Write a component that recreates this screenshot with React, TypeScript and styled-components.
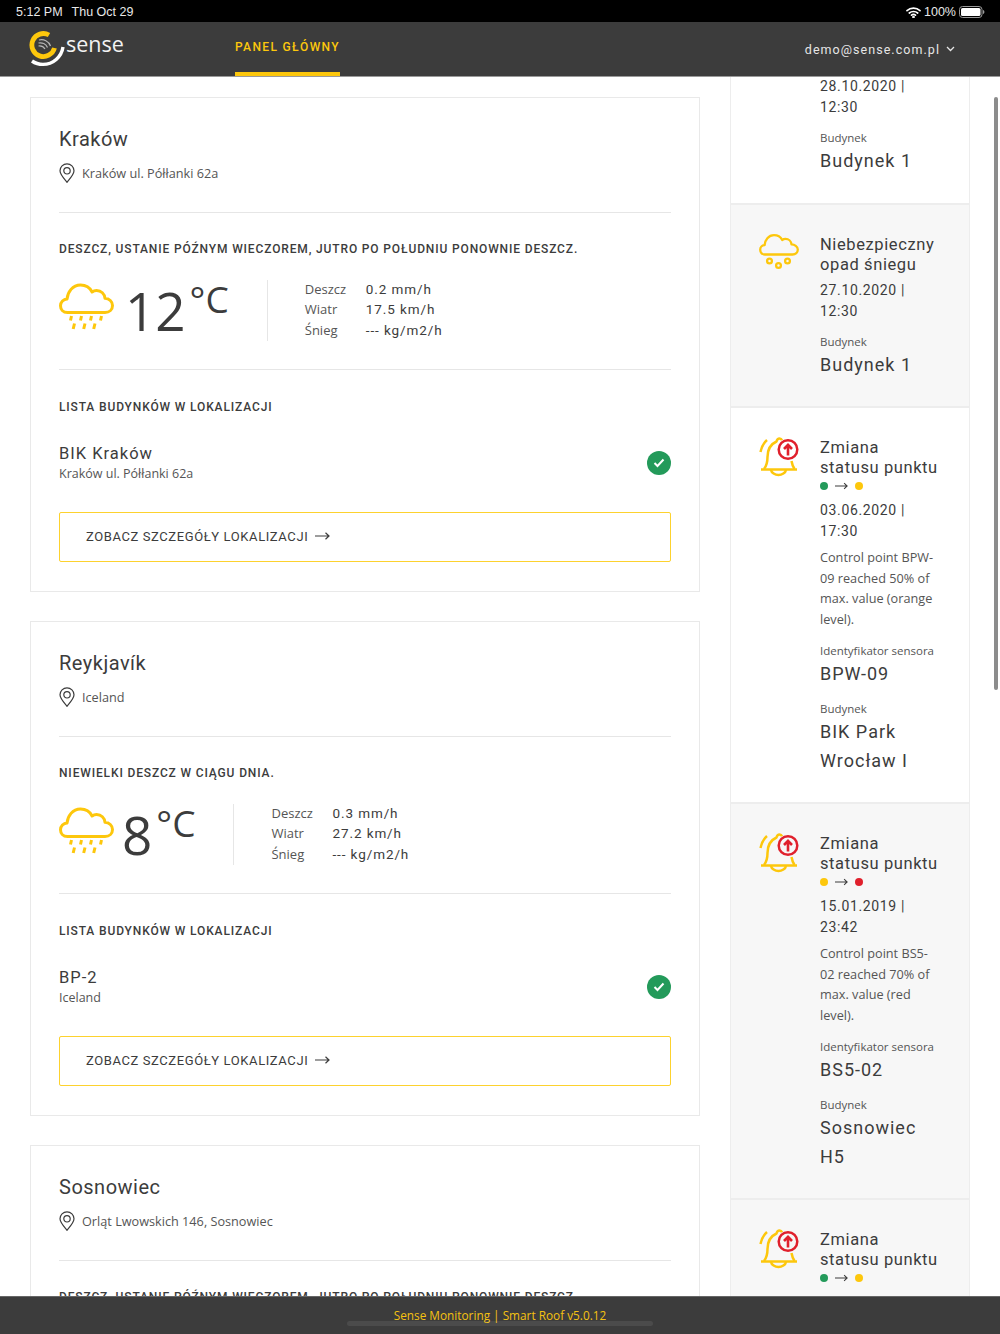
import React from 'react';
import styled, { createGlobalStyle } from 'styled-components';

const GlobalStyle = createGlobalStyle`
  html, body {
    margin: 0;
    padding: 0;
    background: #fff;
  }
  * {
    box-sizing: border-box;
  }
`;

const HEAD = `Roboto, "Noto Sans", sans-serif`;
const BODY = `"Open Sans", "Noto Sans", sans-serif`;

const Page = styled.div`
  position: relative;
  display: flex;
  flex-direction: column;
  width: 1000px;
  height: 1334px;
  overflow: hidden;
  color: #3c3c3c;
`;

const StatusBar = styled.div`
  display: flex;
  justify-content: space-between;
  align-items: center;
  flex: 0 0 22px;
  padding: 2px 15px 0 16px;
  background: #000;
  color: #e8e8e8;
  font: 12.5px "Liberation Sans", sans-serif;
`;
const StatusLeft = styled.div`
  display: flex;
  gap: 9px;
`;
const StatusRight = styled.div`
  display: flex;
  align-items: center;
  gap: 3px;
`;

const Header = styled.header`
  display: flex;
  justify-content: space-between;
  flex: 0 0 55px;
  padding: 0 45px 0 29px;
  background: #3c3c3c;
  border-bottom: 1px solid #999;
`;
const HeaderLeft = styled.div`
  display: flex;
`;
const Logo = styled.div`
  display: flex;
  align-items: flex-start;
  width: 206px;
  padding-top: 9px;
`;
const LogoText = styled.span`
  margin: 1px 0 0 1px;
  color: #f2f2f2;
  font: 400 21.5px/24px ${BODY};
`;
const NavItem = styled.div`
  display: flex;
  align-items: center;
  height: 54px;
  border-bottom: 4px solid #fdc70c;
  color: #fdc70c;
  font: 500 12px ${HEAD};
  letter-spacing: 1.35px;
`;
const UserMenu = styled.div`
  display: flex;
  align-items: center;
  gap: 6px;
  color: #e6e6e6;
  font: 400 12.5px ${HEAD};
  letter-spacing: 1.05px;
`;

const Main = styled.main`
  display: flex;
  flex: 1;
  gap: 30px;
  min-height: 0;
  padding: 0 30px;
  overflow: hidden;
`;
const LeftColumn = styled.div`
  display: flex;
  flex-direction: column;
  flex: 0 0 670px;
  gap: 29px;
  padding-top: 20px;
`;
const RightColumn = styled.div`
  display: flex;
  flex-direction: column;
  flex: 0 0 240px;
  min-width: 0;
`;

const LocationCard = styled.section`
  flex: none;
  padding: 28px 28px 29px;
  border: 1px solid #e9e9e9;
`;
const CityName = styled.h2`
  margin: 0;
  font: 400 20px/26px ${HEAD};
  letter-spacing: 0.5px;
`;
const AddressRow = styled.div`
  display: flex;
  align-items: center;
  gap: 7px;
  margin: 9px 0 27px;
  font: 400 12.7px/24px ${BODY};
  color: #555;
`;
const Divider = styled.hr`
  margin: 0;
  border: 0;
  border-top: 1px solid #e6e6e6;
`;
const SectionLabel = styled.div<{ $top: number }>`
  margin-top: ${(p) => p.$top}px;
  font: 500 12px/16px ${HEAD};
  letter-spacing: 0.86px;
  text-transform: uppercase;
`;
const WeatherRow = styled.div`
  display: flex;
  align-items: flex-start;
  height: 61px;
  margin: 23px 0 28px;
`;
const CloudSlot = styled.div`
  margin-top: 3px;
  line-height: 0;
`;
const Temperature = styled.div<{ $gap: number }>`
  display: flex;
  align-items: flex-start;
  margin: 0 38px 0 ${(p) => p.$gap}px;
  font: 400 53px/62px ${BODY};
`;
const Unit = styled.span`
  margin-left: 4px;
  font: 400 37px/37px ${BODY};
`;
const Readings = styled.div`
  display: grid;
  grid-template-columns: 61px auto;
  align-items: center;
  align-content: center;
  height: 100%;
  padding: 0 0 2px 37px;
  border-left: 1px solid #e6e6e6;
`;
const ReadingName = styled.span`
  font: 400 13px/20.5px ${BODY};
  color: #555;
`;
const ReadingValue = styled.span`
  font: 400 13.5px/20.5px ${HEAD};
  letter-spacing: 0.9px;
`;
const BuildingRow = styled.div`
  display: flex;
  align-items: center;
  justify-content: space-between;
  margin-top: 28px;
`;
const BuildingName = styled.div`
  font: 400 16.5px/22px ${HEAD};
  letter-spacing: 1px;
`;
const BuildingAddress = styled.div`
  font: 400 12.5px/18px ${BODY};
  color: #555;
`;
const StatusOk = styled.span`
  display: flex;
  align-items: center;
  justify-content: center;
  width: 24px;
  height: 24px;
  border-radius: 50%;
  background: #239a5a;
`;
const DetailsButton = styled.button`
  display: flex;
  align-items: center;
  gap: 7px;
  width: 100%;
  height: 50px;
  margin-top: 29px;
  padding: 0 0 2px 26px;
  background: #fff;
  border: 1px solid #fdd22e;
  border-radius: 2px;
  color: #3c3c3c;
  font: 400 13px ${HEAD};
  letter-spacing: 0.6px;
  text-transform: uppercase;
`;

const AlertCard = styled.article<{ $shaded?: boolean; $flush?: boolean }>`
  display: flex;
  flex: none;
  gap: 21px;
  margin-top: ${(p) => (p.$flush ? -7 : 0)}px;
  padding: ${(p) => (p.$flush ? '0 20px 28px 28px' : '30px 20px 27px 28px')};
  background: ${(p) => (p.$shaded ? '#f7f7f7' : '#fff')};
  border: 1px solid #ededed;
  border-top-width: ${(p) => (p.$flush ? 0 : 1)}px;
`;
const AlertIcon = styled.div`
  flex: 0 0 40px;
  margin-top: -1px;
`;
const AlertBody = styled.div`
  flex: 1;
  min-width: 0;
`;
const AlertTitle = styled.div`
  font: 400 16.5px/19.5px ${HEAD};
  letter-spacing: 0.6px;
  white-space: nowrap;
`;
const AlertDate = styled.div`
  width: 100px;
  margin-top: 6px;
  font: 400 14px/20.5px ${HEAD};
  letter-spacing: 0.65px;
`;
const Transition = styled.div`
  display: flex;
  align-items: center;
  gap: 7px;
  height: 17px;
`;
const Dot = styled.span<{ $color: string }>`
  width: 8px;
  height: 8px;
  border-radius: 50%;
  background: ${(p) => p.$color};
`;
const Description = styled.div`
  width: 116px;
  margin-top: 6px;
  font: 400 12.7px/20.5px ${BODY};
  color: #555;
`;
const FieldLabel = styled.div<{ $top?: number }>`
  margin-top: ${(p) => p.$top ?? 13}px;
  font: 400 11.5px/16px ${BODY};
  color: #555;
`;
const FieldValue = styled.div`
  width: 110px;
  font: 400 18px/29px ${HEAD};
  letter-spacing: 1px;
`;

const Footer = styled.footer`
  position: absolute;
  left: 0;
  right: 0;
  bottom: 0;
  height: 38px;
  padding-top: 10px;
  background: #3c3c3c;
  border-top: 1px solid #666;
  color: #f5c211;
  font: 400 11.8px/17px ${BODY};
  text-align: center;
`;
const HomeIndicator = styled.div`
  position: absolute;
  left: 347px;
  bottom: 8px;
  width: 306px;
  height: 5px;
  border-radius: 3px;
  background: rgba(255, 255, 255, 0.08);
`;
const Scrollbar = styled.div`
  position: absolute;
  top: 97px;
  right: 2px;
  width: 4px;
  height: 593px;
  border-radius: 2px;
  background: #8c8c8c;
`;

const Y = '#fdc70c';

const WifiIcon = () => (
  <svg width="15" height="11" viewBox="0 0 15 11" fill="none" stroke="#fff" strokeWidth="1.7" strokeLinecap="round">
    <path d="M1 3.6C4.6.4 10.4.4 14 3.6" />
    <path d="M3.3 6C5.6 4 9.4 4 11.7 6" />
    <path d="M5.5 8.2c1.1-.9 2.9-.9 4 0" />
    <circle cx="7.5" cy="10" r=".5" fill="#fff" />
  </svg>
);

const BatteryIcon = () => (
  <svg width="26" height="12" viewBox="0 0 26 12">
    <rect x=".5" y=".5" width="22.5" height="11" rx="3" fill="none" stroke="#999" />
    <rect x="2" y="2" width="19.5" height="8" rx="1.6" fill="#fff" />
    <path d="M24 4v4c.9-.3 1.4-1.1 1.4-2S24.900 4.300 24 4z" fill="#999" />
  </svg>
);

const LogoMark = () => (
  <svg width="36" height="36" viewBox="0 0 36 36" fill="none">
    <path d="M20 4A11.500 11.500 0 1 0 25.500 17" stroke={Y} strokeWidth="4.800" />
    <path d="M3 30c3.500 2.500 7 3.400 11 3.400C24 33.400 32.500 26 34 16" stroke="#fff" strokeWidth="3.400" />
    <path d="M10 9c4.500-1.200 10 1 11.500 6M9.500 12c3.500-.8 7.500.8 9 4.500M9.500 15c2.500-.4 5 .6 6.500 3" stroke="#b5b5b5" strokeWidth="1.200" />
  </svg>
);

const Chevron = () => (
  <svg width="9" height="6" viewBox="0 0 9 6" fill="none" stroke="#e6e6e6" strokeWidth="1.300">
    <path d="M1 1l3.500 3.500L8 1" />
  </svg>
);

const PinIcon = () => (
  <svg width="16" height="20" viewBox="0 0 16 20" fill="none" stroke="#3c3c3c" strokeWidth="1.200">
    <path d="M8 19.300C4 14.500 1 11.300 1 7.800a7 7 0 0 1 14 0c0 3.500-3 6.700-7 11.500z" />
    <circle cx="8" cy="7.800" r="3.200" />
  </svg>
);

const RainCloud = () => (
  <svg width="55" height="47" viewBox="0 0 55 47" fill="none" stroke={Y} strokeWidth="3" strokeLinejoin="round">
    <path d="M8.500 29.500C4 29.500 1.500 26.300 1.500 22.800c0-3.700 3-6.700 6.500-6.800C8.700 9 13.500 2 21.500 2c5.500 0 9.600 3 11.600 7 1.300-1 3-1.500 4.500-1.500 4.600 0 8 3.400 8.400 7.800 4.200.2 7.500 3.300 7.500 7.200 0 4-3 7-7.500 7z" />
    <path d="M12.500 33l-1 4.500M22.500 33l-1 4.500M32.500 33l-1 4.500M42.500 33l-1 4.500" />
    <path d="M15.500 40.500l-1.300 5.500M26 40.500l-1.300 5.500M36 40.500l-1.300 5.500" />
  </svg>
);

const SnowCloud = () => (
  <svg width="40" height="38" viewBox="0 0 40 38" fill="none" stroke={Y} strokeWidth="2.300" strokeLinejoin="round">
    <path d="M6 20.500C3 20.500 1.200 18.300 1.200 15.800c0-2.500 2-4.600 4.400-4.700C6 6 9.500 1.200 15 1.200c3.800 0 6.700 2 8.200 4.800 1-.8 2.100-1.100 3.300-1.100 3.300 0 5.700 2.400 6 5.500 3 .1 6.300 2.200 6.300 5.200 0 2.900-2.200 4.900-5.300 4.900z" />
    <circle cx="10.500" cy="27" r="2.400" />
    <circle cx="19.500" cy="31.500" r="2.400" />
    <circle cx="28.500" cy="27" r="2.400" />
  </svg>
);

const BellAlert = () => (
  <svg width="40" height="40" viewBox="0 0 40 40" fill="none">
    <g stroke={Y} strokeWidth="2.500" strokeLinejoin="round">
      <path d="M1.500 15C2.500 10 4.500 6 8 3" />
      <path d="M5 32c2.500-3 3.500-7 3.500-12C8.500 12 12 7 17.500 4.500 18 2.500 19 1.500 20.500 1.500c1 0 2 .6 2.500 1.800" />
      <path d="M32.500 24c.5 3 1.500 5.500 3 8" />
      <path d="M2 32.500h36" />
      <path d="M12 33c.5 2.800 4 5 7.500 5s7-2.200 7.500-5" />
    </g>
    <circle cx="29" cy="12.500" r="9.300" fill="none" stroke="#e0202c" strokeWidth="2.500" />
    <path d="M29 18.500V8M25 12l4-4.200 4 4.200" fill="none" stroke="#e0202c" strokeWidth="2.600" />
  </svg>
);

const Arrow = ({ size = 15 }: { size?: number }) => (
  <svg width={size} height="8" viewBox="0 0 15 8" fill="none" stroke="#3c3c3c" strokeWidth="1.200">
    <path d="M0 4h14M10.500 .8L14 4l-3.500 3.200" />
  </svg>
);

interface ILocation {
  city: string;
  address: string;
  forecast: string;
  temp: string;
  tempGap: number;
  rain: string;
  wind: string;
  building: string;
}

const locations: ILocation[] = [
  {
    city: 'Kraków',
    address: 'Kraków ul. Półłanki 62a',
    forecast: 'Deszcz, ustanie późnym wieczorem, jutro po południu ponownie deszcz.',
    temp: '12',
    tempGap: 11,
    rain: '0.2 mm/h',
    wind: '17.5 km/h',
    building: 'BIK Kraków',
  },
  {
    city: 'Reykjavík',
    address: 'Iceland',
    forecast: 'Niewielki deszcz w ciągu dnia.',
    temp: '8',
    tempGap: 8,
    rain: '0.3 mm/h',
    wind: '27.2 km/h',
    building: 'BP-2',
  },
  {
    city: 'Sosnowiec',
    address: 'Orląt Lwowskich 146, Sosnowiec',
    forecast: 'Deszcz, ustanie późnym wieczorem, jutro po południu ponownie deszcz.',
    temp: '12',
    tempGap: 11,
    rain: '0.2 mm/h',
    wind: '17.5 km/h',
    building: 'Sosnowiec H5',
  },
];

function Location({ data }: { data: ILocation }) {
  return (
    <LocationCard>
      <CityName>{data.city}</CityName>
      <AddressRow>
        <PinIcon />
        {data.address}
      </AddressRow>
      <Divider />
      <SectionLabel $top={28}>{data.forecast}</SectionLabel>
      <WeatherRow>
        <CloudSlot>
          <RainCloud />
        </CloudSlot>
        <Temperature $gap={data.tempGap}>
          {data.temp}
          <Unit>°C</Unit>
        </Temperature>
        <Readings>
          <ReadingName>Deszcz</ReadingName>
          <ReadingValue>{data.rain}</ReadingValue>
          <ReadingName>Wiatr</ReadingName>
          <ReadingValue>{data.wind}</ReadingValue>
          <ReadingName>Śnieg</ReadingName>
          <ReadingValue>--- kg/m2/h</ReadingValue>
        </Readings>
      </WeatherRow>
      <Divider />
      <SectionLabel $top={29}>Lista budynków w lokalizacji</SectionLabel>
      <BuildingRow>
        <div>
          <BuildingName>{data.building}</BuildingName>
          <BuildingAddress>{data.address}</BuildingAddress>
        </div>
        <StatusOk>
          <svg width="12" height="10" viewBox="0 0 12 10" fill="none" stroke="#fff" strokeWidth="2">
            <path d="M1.500 5l3 3 6-6.500" />
          </svg>
        </StatusOk>
      </BuildingRow>
      <DetailsButton>
        Zobacz szczegóły lokalizacji
        <Arrow />
      </DetailsButton>
    </LocationCard>
  );
}

function StatusChange({ from, to }: { from: string; to: string }) {
  return (
    <Transition>
      <Dot $color={from} />
      <Arrow size={13} />
      <Dot $color={to} />
    </Transition>
  );
}

const GREEN = '#239a5a';
const RED = '#e0202c';

function App() {
  return (
    <Page>
      <GlobalStyle />
      <StatusBar>
        <StatusLeft>
          <span>5:12 PM</span>
          <span>Thu Oct 29</span>
        </StatusLeft>
        <StatusRight>
          <WifiIcon />
          <span>100%</span>
          <BatteryIcon />
        </StatusRight>
      </StatusBar>
      <Header>
        <HeaderLeft>
          <Logo>
            <LogoMark />
            <LogoText>sense</LogoText>
          </Logo>
          <NavItem>PANEL GŁÓWNY</NavItem>
        </HeaderLeft>
        <UserMenu>
          demo@sense.com.pl
          <Chevron />
        </UserMenu>
      </Header>
      <Main>
        <LeftColumn>
          {locations.map((location) => (
            <Location data={location} key={location.city} />
          ))}
        </LeftColumn>
        <RightColumn>
          <AlertCard $flush>
            <AlertIcon />
            <AlertBody>
              <AlertDate>28.10.2020 | 12:30</AlertDate>
              <FieldLabel>Budynek</FieldLabel>
              <FieldValue>Budynek 1</FieldValue>
            </AlertBody>
          </AlertCard>
          <AlertCard $shaded>
            <AlertIcon>
              <SnowCloud />
            </AlertIcon>
            <AlertBody>
              <AlertTitle>
                Niebezpieczny
                <br />
                opad śniegu
              </AlertTitle>
              <AlertDate>27.10.2020 | 12:30</AlertDate>
              <FieldLabel>Budynek</FieldLabel>
              <FieldValue>Budynek 1</FieldValue>
            </AlertBody>
          </AlertCard>
          <AlertCard>
            <AlertIcon>
              <BellAlert />
            </AlertIcon>
            <AlertBody>
              <AlertTitle>
                Zmiana
                <br />
                statusu punktu
              </AlertTitle>
              <StatusChange from={GREEN} to={Y} />
              <AlertDate>03.06.2020 | 17:30</AlertDate>
              <Description>Control point BPW-09 reached 50% of max. value (orange level).</Description>
              <FieldLabel $top={14}>Identyfikator sensora</FieldLabel>
              <FieldValue>BPW-09</FieldValue>
              <FieldLabel>Budynek</FieldLabel>
              <FieldValue>BIK Park Wrocław I</FieldValue>
            </AlertBody>
          </AlertCard>
          <AlertCard $shaded>
            <AlertIcon>
              <BellAlert />
            </AlertIcon>
            <AlertBody>
              <AlertTitle>
                Zmiana
                <br />
                statusu punktu
              </AlertTitle>
              <StatusChange from={Y} to={RED} />
              <AlertDate>15.01.2019 | 23:42</AlertDate>
              <Description>Control point BS5-02 reached 70% of max. value (red level).</Description>
              <FieldLabel $top={14}>Identyfikator sensora</FieldLabel>
              <FieldValue>BS5-02</FieldValue>
              <FieldLabel>Budynek</FieldLabel>
              <FieldValue>Sosnowiec H5</FieldValue>
            </AlertBody>
          </AlertCard>
          <AlertCard $shaded>
            <AlertIcon>
              <BellAlert />
            </AlertIcon>
            <AlertBody>
              <AlertTitle>
                Zmiana
                <br />
                statusu punktu
              </AlertTitle>
              <StatusChange from={GREEN} to={Y} />
            </AlertBody>
          </AlertCard>
        </RightColumn>
      </Main>
      <Scrollbar />
      <Footer>Sense Monitoring | Smart Roof v5.0.12</Footer>
      <HomeIndicator />
    </Page>
  );
}

export default App;
